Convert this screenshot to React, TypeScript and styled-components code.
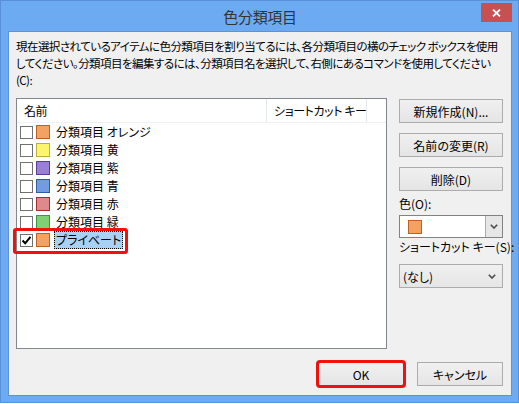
import React from 'react';
import styled, { createGlobalStyle } from 'styled-components';

const categories = [
  { id: 'orange', name: '分類項目 オレンジ', fill: '#f2a262', edge: '#c25f1c', checked: false },
  { id: 'yellow', name: '分類項目 黄', fill: '#fbf46c', edge: '#bdb03a', checked: false },
  { id: 'purple', name: '分類項目 紫', fill: '#9a80d3', edge: '#5a3d9c', checked: false },
  { id: 'blue', name: '分類項目 青', fill: '#729cdf', edge: '#2f5ca6', checked: false },
  { id: 'red', name: '分類項目 赤', fill: '#df8a8a', edge: '#a92a2a', checked: false },
  { id: 'green', name: '分類項目 緑', fill: '#80cf74', edge: '#3c983c', checked: false },
  { id: 'private', name: 'プライベート', fill: '#f2a262', edge: '#c25f1c', checked: true },
];

const selectedId = 'private';

const Chevron = () => (
  <svg width='8' height='5' viewBox='0 0 8 5'>
    <polyline points='0.8,0.8 4,4 7.2,0.8' fill='none' stroke='#4a4a4a' strokeWidth='1.6' />
  </svg>
);

function App() {
  return (
    <>
      <GlobalStyle />
      <SWindow>
        <STitleBar>
          <span />
          <STitle>色分類項目</STitle>
          <SCloseButton>
            <svg width='9' height='8' viewBox='0 0 9 8'>
              <path d='M1 0.5 L8 7.5 M8 0.5 L1 7.5' stroke='#fff' strokeWidth='1.8' />
            </svg>
          </SCloseButton>
        </STitleBar>
        <SClient>
          <SDescription>
            <span>現在選択されているアイテムに色分類項目を割り当てるには、各分類項目の横のチェック ボックスを使用</span>
            <span>してください。分類項目を編集するには、分類項目名を選択して、右側にあるコマンドを使用してください</span>
            <span>(C):</span>
          </SDescription>
          <SMain>
            <SListBox>
              <SListHeader>
                <SHeaderCell $width={250}>名前</SHeaderCell>
                <SHeaderCell $width={100}>ショートカット キー</SHeaderCell>
              </SListHeader>
              {categories.map(item => (
                <SRow key={item.id}>
                  <SCheckBox>
                    {item.checked && (
                      <svg width='11' height='11' viewBox='0 0 11 11'>
                        <path d='M1.5 5.5 L4.2 8.3 L9.5 1.8' fill='none' stroke='#000' strokeWidth='2' />
                      </svg>
                    )}
                  </SCheckBox>
                  <SSwatch $fill={item.fill} $edge={item.edge} />
                  <SItemName $selected={item.id === selectedId}>{item.name}</SItemName>
                  {item.id === selectedId && <SRowMarker />}
                </SRow>
              ))}
            </SListBox>
            <SSideColumn>
              <SButton>新規作成(N)...</SButton>
              <SButton>名前の変更(R)</SButton>
              <SButton>削除(D)</SButton>
              <SFieldLabel>色(O):</SFieldLabel>
              <SColorCombo>
                <SSwatch $fill='#f2a262' $edge='#c25f1c' />
                <SComboArrow>
                  <Chevron />
                </SComboArrow>
              </SColorCombo>
              <SFieldLabel>ショートカット キー(S):</SFieldLabel>
              <SSelectBox>
                <span>(なし)</span>
                <Chevron />
              </SSelectBox>
            </SSideColumn>
          </SMain>
          <SFooter>
            <SButton $default $marked>
              OK
            </SButton>
            <SButton>キャンセル</SButton>
          </SFooter>
        </SClient>
      </SWindow>
    </>
  );
}

export default App;

const GlobalStyle = createGlobalStyle`
  html, body {
    margin: 0;
    padding: 0;
    background: #ffffff;
  }
  body {
    font-family: 'Noto Sans CJK JP', 'Noto Sans', sans-serif;
    font-size: 12px;
    color: #000;
  }
  * {
    box-sizing: border-box;
  }
`;

const SWindow = styled.div`
  width: 519px;
  height: 403px;
  border: 1px solid #5a90d6;
  background: #6cabf2;
  padding: 0 6px 6px 7px;
  display: flex;
  flex-direction: column;
`;

const STitleBar = styled.div`
  height: 30px;
  display: grid;
  grid-template-columns: 1fr auto 1fr;
  align-items: center;
`;

const STitle = styled.span`
  font-size: 15px;
  color: #333;
  letter-spacing: -0.3px;
  padding-top: 1px;
`;

const SCloseButton = styled.div`
  justify-self: end;
  align-self: start;
  margin-top: 2px;
  width: 31px;
  height: 19px;
  background: #c75050;
  display: flex;
  align-items: center;
  justify-content: center;
`;

const SClient = styled.div`
  flex: 1;
  background: #f0f0f0;
  border: 1px solid #5f92d4;
  padding: 6px 8px 9px 7px;
  display: flex;
  flex-direction: column;
  font-feature-settings: 'palt';
`;

const SDescription = styled.div`
  display: flex;
  flex-direction: column;
  font-size: 11.5px;
  line-height: 17px;
  letter-spacing: -0.55px;
  white-space: nowrap;
`;

const SMain = styled.div`
  flex: 1;
  margin-top: 9px;
  display: flex;
  gap: 12px;
`;

const SListBox = styled.div`
  width: 371px;
  border: 1px solid #828790;
  background: #fff;
`;

const SListHeader = styled.div`
  height: 24px;
  display: flex;
  border-bottom: 1px solid #eef1f6;
`;

const SHeaderCell = styled.div<{ $width: number }>`
  width: ${props => props.$width}px;
  padding-left: 7px;
  display: flex;
  align-items: center;
  white-space: nowrap;
  overflow: hidden;
  letter-spacing: -0.4px;
  border-right: 1px solid #e3e8f2;
`;

const SRow = styled.div`
  position: relative;
  height: 18px;
  display: flex;
  align-items: center;
  padding-left: 3px;
`;

const SCheckBox = styled.span`
  width: 13px;
  height: 13px;
  border: 1px solid #707070;
  background: #fff;
  display: flex;
  align-items: center;
  justify-content: center;
`;

const SSwatch = styled.span<{ $fill: string; $edge: string }>`
  width: 14px;
  height: 14px;
  margin-left: 3px;
  background: ${props => props.$fill};
  border: 1px solid ${props => props.$edge};
`;

const SItemName = styled.span<{ $selected?: boolean }>`
  margin-left: ${props => (props.$selected ? '4px' : '6px')};
  height: 18px;
  line-height: ${props => (props.$selected ? '16px' : '18px')};
  padding: 0 ${props => (props.$selected ? '1px' : '0')};
  border: ${props => (props.$selected ? '1px dotted #000' : 'none')};
  background: ${props => (props.$selected ? '#a9d1f5' : 'transparent')};
`;

const SRowMarker = styled.span`
  position: absolute;
  left: -4px;
  top: -3px;
  width: 115px;
  height: 26px;
  border: 3px solid #f01010;
  border-radius: 3px;
`;

const SSideColumn = styled.div`
  width: 104px;
  padding-top: 1px;
  display: flex;
  flex-direction: column;
`;

const SButton = styled.div<{ $default?: boolean; $marked?: boolean }>`
  height: 24px;
  flex-shrink: 0;
  margin-bottom: 10px;
  border: 1px solid ${props => (props.$default ? '#3c7fb1' : '#acacac')};
  background: linear-gradient(#f0f0f0, #e5e5e5);
  display: flex;
  align-items: center;
  justify-content: center;
  color: #000;
  ${props =>
    props.$marked &&
    `
    outline: 3px solid #f01010;
    outline-offset: -1px;
    border-radius: 2px;
  `}
`;

const SFieldLabel = styled.div`
  height: 16px;
  line-height: 16px;
  margin-top: -5px;
  margin-bottom: 3px;
  white-space: nowrap;
`;

const SColorCombo = styled.div`
  height: 23px;
  margin-bottom: 6px;
  border: 1px solid #828282;
  background: #fff;
  display: flex;
  align-items: center;
  padding-left: 5px;
  & > span {
    margin-left: 3px;
  }
`;

const SComboArrow = styled.div`
  margin-left: auto;
  width: 17px;
  height: 21px;
  background: #e6e6e6;
  border-left: 1px solid #acacac;
  display: flex;
  align-items: center;
  justify-content: center;
`;

const SSelectBox = styled.div`
  height: 24px;
  margin-top: 6px;
  border: 1px solid #acacac;
  background: linear-gradient(#f0f0f0, #e5e5e5);
  display: flex;
  align-items: center;
  justify-content: space-between;
  padding: 0 6px 0 3px;
`;

const SFooter = styled.div`
  margin-top: 13px;
  display: flex;
  justify-content: flex-end;
  gap: 13px;
  & > div {
    margin-bottom: 0;
    width: 86px;
  }
`;
